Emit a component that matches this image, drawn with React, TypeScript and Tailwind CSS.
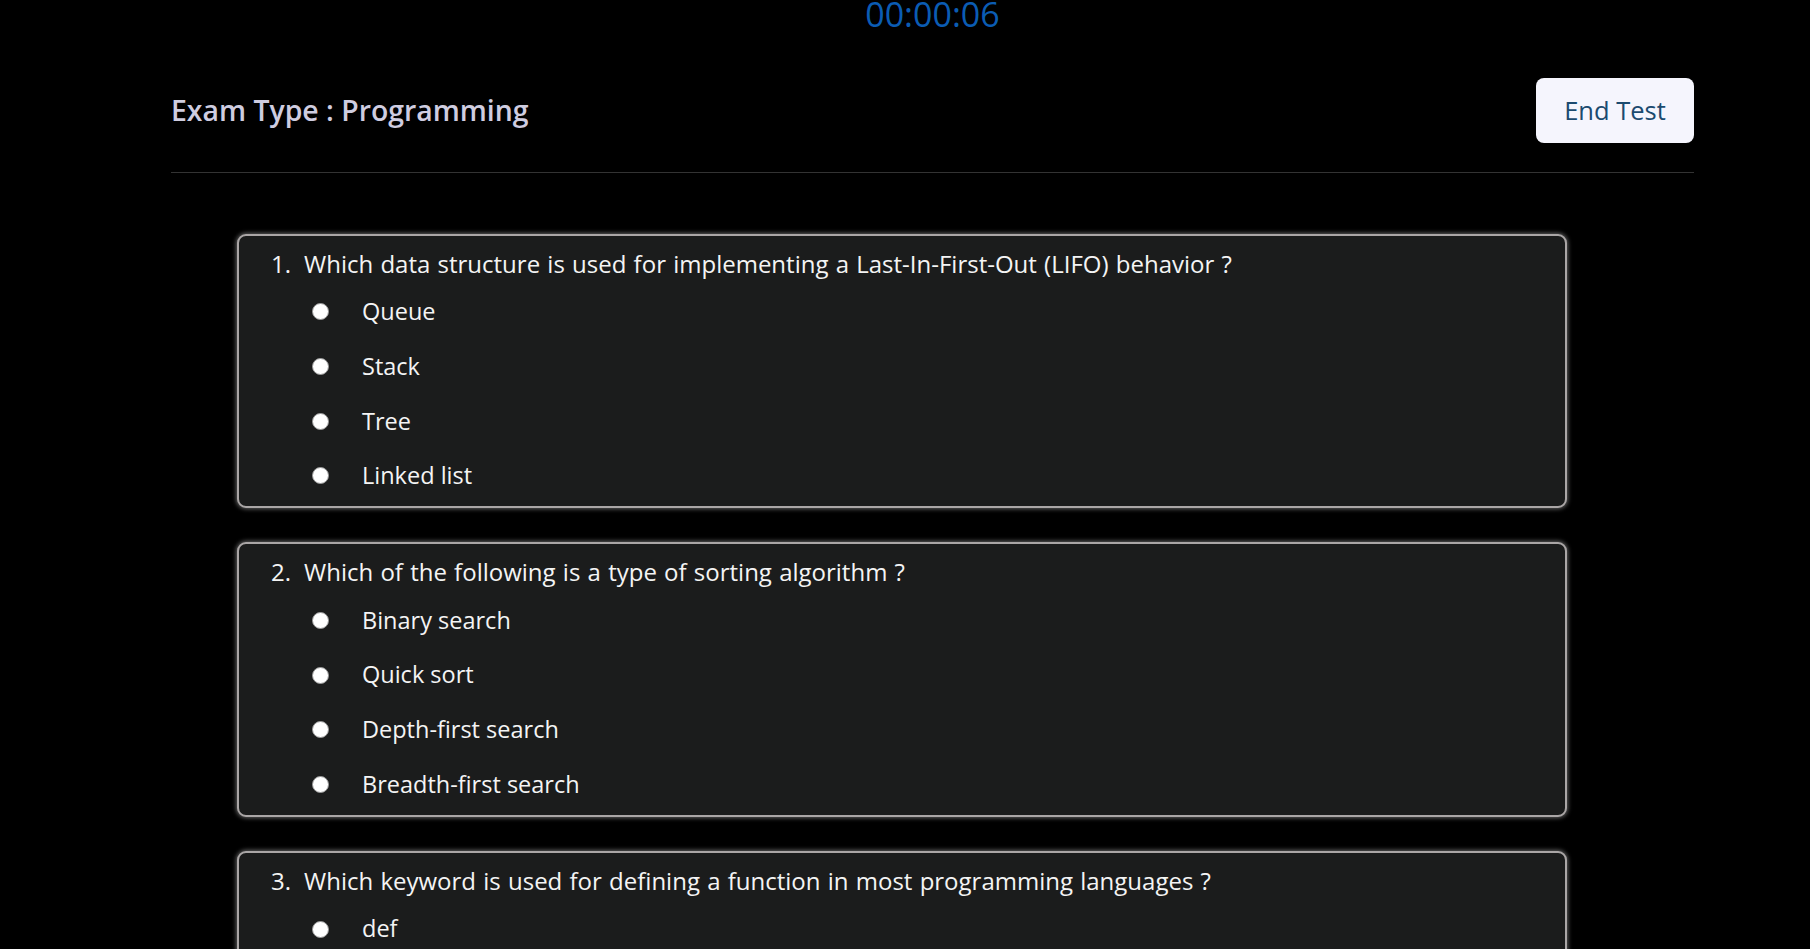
import React from 'react';

interface Question {
  text: string;
  options: string[];
}

const questions: Question[] = [
  {
    text: 'Which data structure is used for implementing a Last-In-First-Out (LIFO) behavior ?',
    options: ['Queue', 'Stack', 'Tree', 'Linked list'],
  },
  {
    text: 'Which of the following is a type of sorting algorithm ?',
    options: ['Binary search', 'Quick sort', 'Depth-first search', 'Breadth-first search'],
  },
  {
    text: 'Which keyword is used for defining a function in most programming languages ?',
    options: ['def', 'function', 'func', 'define'],
  },
];

const QuestionCard: React.FC<{ index: number; q: Question }> = ({ index, q }) => (
  <div className="rounded-[9px] border-2 border-[#aaa6a6] bg-[#1b1c1c] shadow-[0_0_4px_1px_rgba(140,140,140,0.7)] pl-[32px] pt-[13px] pb-[3px]">
    {/* Question */}
    <div className="flex h-[30px] items-center text-[24px] [word-spacing:1px] text-[#f4f4f4]">
      <span className="w-[33px]">{index}.</span>
      <span>{q.text}</span>
    </div>

    {/* Options */}
    <div className="mt-[6px]">
      {q.options.map((opt) => (
        <label key={opt} className="flex h-[54.67px] items-center text-[23.5px] text-[#f4f4f4]">
          <span className="ml-[41px] h-[17px] w-[17px] rounded-full border border-[#9a9a9a] bg-white" />
          <span className="ml-[33px]">{opt}</span>
        </label>
      ))}
    </div>
  </div>
);

export default function App() {
  return (
    <div className="min-h-screen bg-black font-['Open_Sans',sans-serif]">
      {/* Timer */}
      <div className="ml-[171px] w-[1523px] text-center">
        <div className="-mt-[3px] text-[34px] leading-none text-[#0b5cb3]">00:00:06</div>
      </div>

      {/* Header */}
      <div className="ml-[171px] w-[1523px]">
        <div className="mt-[46.5px] flex items-center justify-between">
          <h2 className="text-[28.4px] font-semibold text-[#cfcde0]">Exam Type : Programming</h2>
          <button className="h-[65px] w-[158px] rounded-[8px] bg-[#f5f5fd] text-[25.5px] text-[#1b4a6f]">
            End Test
          </button>
        </div>
        <div className="mt-[29px] h-px bg-[#333333]" />
      </div>

      {/* Questions */}
      <div className="ml-[237px] mt-[61px] flex w-[1330px] flex-col gap-[34px] pb-10">
        {questions.map((q, i) => (
          <QuestionCard key={i} index={i + 1} q={q} />
        ))}
      </div>
    </div>
  );
}
